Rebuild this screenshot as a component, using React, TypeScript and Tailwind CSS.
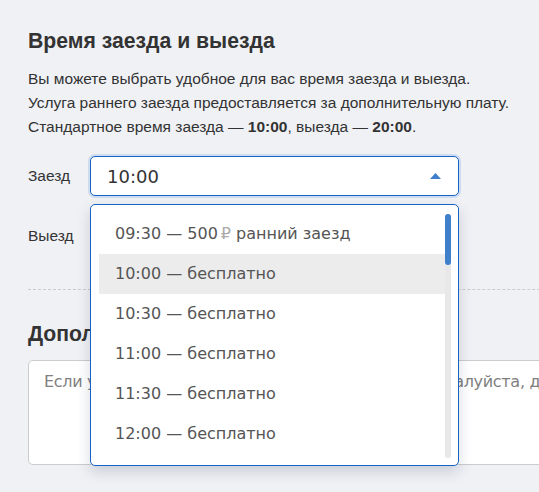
import React from "react";

const options = [
  { t: "09:30", rest: "500", rub: true, tail: "ранний заезд" },
  { t: "10:00", rest: "бесплатно", active: true },
  { t: "10:30", rest: "бесплатно" },
  { t: "11:00", rest: "бесплатно" },
  { t: "11:30", rest: "бесплатно" },
  { t: "12:00", rest: "бесплатно" },
  { t: "12:30", rest: "бесплатно" },
];

export default function App() {
  return (
    <div className="w-[539px] h-[492px] overflow-hidden bg-[#f0f1f5] text-[#333]" style={{ fontFamily: '"Liberation Sans", Arial, sans-serif' }}>
      <div className="w-[700px] pl-[28px] pt-[27px]">
        <h2 className="text-[21.2px] font-bold leading-[28px] text-[#333]">Время заезда и выезда</h2>
        <p className="mt-[12px] text-[15.5px] leading-[24px] text-[#333]">
          Вы можете выбрать удобное для вас время заезда и выезда.
          <br />
          Услуга раннего заезда предоставляется за дополнительную плату.
          <br />
          Стандартное время заезда — <b>10:00</b>, выезда — <b>20:00</b>.
        </p>

        <div className="mt-[17px] flex flex-col gap-[20px]">
          <div className="flex items-center">
            <div className="w-[62px] text-[15.5px]">Заезд</div>
            <div className="relative w-[369px]">
              <div className="h-[40px] rounded-[5px] border border-[#1563c4] bg-white shadow-[0_0_0_2px_#cfdcef] flex items-center justify-between pl-[16px] pr-[16px]">
                <span className="text-[18px] text-[#333] pt-[1px]" style={{ fontFamily: '"DejaVu Sans", Verdana, sans-serif' }}>10:00</span>
                <svg width="11" height="6" viewBox="0 0 11 6" className="mr-[1px]">
                  <path d="M0 6 L5.5 0 L11 6 Z" fill="#3f7fcb" />
                </svg>
              </div>
              <div className="absolute left-0 top-[48px] z-10 w-[369px] h-[262px] rounded-[5px] border border-[#1563c4] bg-white shadow-[0_6px_14px_rgba(30,50,90,0.18)] flex pt-[9px] pl-[8px] pr-[7px] pb-[8px]" style={{ fontFamily: '"DejaVu Sans", Verdana, sans-serif' }}>
                <div className="flex-1 overflow-hidden">
                  {options.map((o) => (
                    <div key={o.t} className={`h-[40px] flex items-center pl-[16px] text-[16px] text-[#555] whitespace-nowrap ${o.active ? "bg-[#ececec]" : ""}`}>
                      <span>
                        {o.t} — {o.rest}
                        {o.rub && <span className="ml-[3px] mr-[5px] text-[#aaa]">₽</span>}
                        {o.tail}
                      </span>
                    </div>
                  ))}
                </div>
                <div className="w-[6px] h-[244px] rounded-[3px] bg-[#e8e8e8] flex flex-col">
                  <div className="h-[51px] rounded-[3px] bg-[#3f7fcb]" />
                </div>
              </div>
            </div>
          </div>
          <div className="flex items-center">
            <div className="w-[62px] text-[15.5px]">Выезд</div>
            <div className="w-[369px] h-[40px] rounded-[5px] border border-[#ccc] bg-white" />
          </div>
        </div>

        <div className="mt-[33px] border-t border-dashed border-[#ccc]" />

        <h2 className="mt-[30px] text-[21.2px] font-bold leading-[28px] text-[#333]">Дополнительные пожелания</h2>
        <div className="mt-[12px] h-[105px] rounded-[5px] border border-[#ccc] bg-white pl-[15px] pt-[9px]">
          <div className="text-[16px] leading-[24px] tracking-[-0.3px] text-[#808080] whitespace-nowrap" style={{ fontFamily: '"DejaVu Sans", Verdana, sans-serif' }}>
            Если у вас есть дополнительные пожелания, пожалуйста, добавьте их сюда
          </div>
        </div>
      </div>
    </div>
  );
}
